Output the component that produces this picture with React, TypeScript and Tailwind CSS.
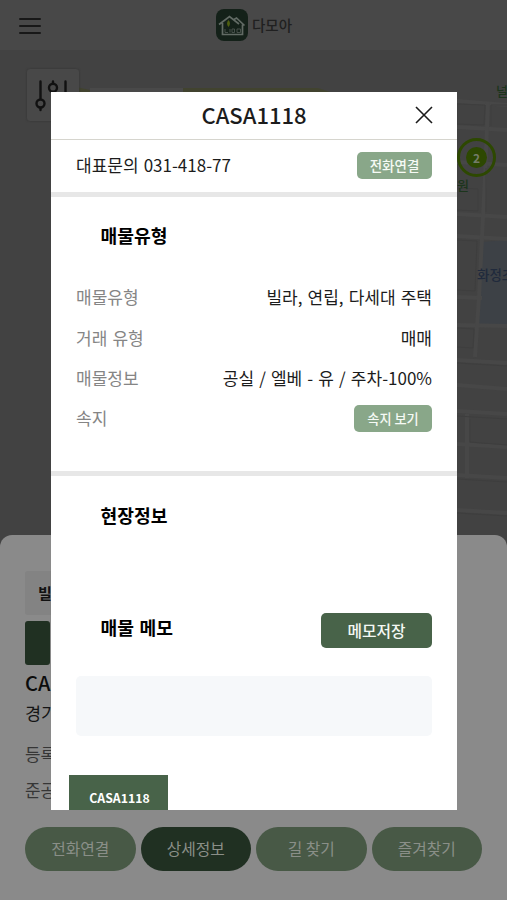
import React from "react";

function Logo() {
  return (
    <svg width="32" height="32" viewBox="0 0 32 32" fill="none">
      <rect width="32" height="32" rx="8" fill="#142119" />
      <path d="M3 15.5 13.5 7.500l9.500 7.500M18 10.500l2.500-1.500 8 7.500M6.500 14v11.500h20V15.500" stroke="#626b65" strokeWidth="1.7" />
      <path d="M12.500 11c2 2.500 2 4.500 0 7-2-2.500-2-4.500 0-7" fill="#4f5f10" />
      <path d="M9 20v3.500h3M14 20v3.500M16 20h2.500v3.500H16zM21 20h3.500v3.500H21z" stroke="#4c5650" strokeWidth=".9" />
    </svg>
  );
}

function TopBar() {
  return (
    <header className="flex h-[50px] shrink-0 items-center bg-[#484848] px-[19px]">
      <div className="flex flex-1 flex-col gap-[5px] pt-0.5">
        <span className="h-0.5 w-[22px] rounded bg-[#181818]" />
        <span className="h-0.5 w-[22px] rounded bg-[#181818]" />
        <span className="h-0.5 w-[22px] rounded bg-[#181818]" />
      </div>
      <div className="flex items-center gap-1 pl-px">
        <Logo />
        <span className="text-[14.500px] leading-5 font-medium text-[#202020]">다모아</span>
      </div>
      <div className="flex-1" />
    </header>
  );
}

function MapArea() {
  return (
    <section className="relative h-[485px] shrink-0 overflow-hidden bg-[#424242]">
      <svg className="absolute inset-0" width="507" height="500" fill="none">
        <path d="M76 42V37l14 3h93V38h135l15 5" fill="#41432f" />
        <path d="M90 40h93" stroke="#494949" strokeWidth="4" />
        <path d="M482 192l25-2v84h-28z" fill="#3d4146" />
        <g stroke="#474747" strokeWidth="4">
          <path d="M457 51l50 4M457 77l50 3M457 112l50 3M457 164l50 3M457 186l50 3M457 247l25 1M457 275l50 1M457 310l50 3M457 335l50 4M457 361l50 3M457 394l50 3M457 425l50 3M457 460l50 3" />
          <path d="M488 52l-3 75-6 120-4 60M467 364v64" />
        </g>
        <g stroke="#3e3e3e">
          <path d="M457 54l28 1-1 20-27-1zM491 55h16M491 55v21M457 138l21 1v22l-21-1M486 118v44M457 190l20 1-2 50-18-1M457 278l17 1-1 19-16-1M457 313l50 3M457 366l50 3M470 369v23l37 3M457 429l50 3M457 463l50 3" />
        </g>
      </svg>
      <span className="absolute top-[31px] left-[496px] text-[13px] leading-5 font-medium whitespace-nowrap text-[#1c351c]">널</span>
      <span className="absolute top-[125px] left-[457px] text-[13px] leading-5 font-medium whitespace-nowrap text-[#1c351c]">원</span>
      <span className="absolute top-[214px] left-[477px] text-[13.500px] leading-5 font-medium whitespace-nowrap text-[#202a3c]">화정초</span>
      <div className="absolute top-[88px] left-[457px] flex size-[39px] items-center justify-center rounded-full border-[3px] border-[#2d4801]">
        <span className="flex size-[21px] items-center justify-center rounded-full bg-[#2d4801] text-[12px] leading-4 font-bold text-[#747c68]">2</span>
      </div>
      <div className="absolute top-[19px] left-[27px] size-[52px] rounded-[3px] bg-[#484848] shadow-[0_0_2px_#303030]">
        <svg width="52" height="52" fill="none" stroke="#111" strokeWidth="2.4" strokeLinecap="round">
          <path d="M13.500 12.500v17M13.500 39v2M26 12.500v2M26 23v17M38.500 12.500v17" />
          <circle cx="13.500" cy="34.500" r="4" />
          <circle cx="26" cy="18.800" r="4" />
          <circle cx="38.500" cy="34.500" r="4" />
        </svg>
      </div>
    </section>
  );
}

const actions = [
  { label: "전화연결", style: "bg-[#485946]" },
  { label: "상세정보", style: "bg-[#203022]" },
  { label: "길 찾기", style: "bg-[#485946]" },
  { label: "즐겨찾기", style: "bg-[#485946]" },
];

function BottomSheet() {
  return (
    <section className="flex flex-1 flex-col bg-[#424242]">
      <div className="flex flex-1 flex-col rounded-t-[12px] bg-[#8a8a8a] px-[25px] pt-9">
        <div className="h-11 w-[60px] rounded-[3px] bg-[#838383] pl-[13px] text-[15px] leading-[43px] font-bold text-[#111]">빌라</div>
        <div className="mt-1.5 h-11 w-[25px] rounded-[3px] bg-[#203022]" />
        <div className="mt-[3px] text-[20px] leading-[29px] font-medium text-[#0c0c0c]">CASA1118</div>
        <div className="mt-px text-[17.500px] leading-[30px] text-[#151515]">경기도</div>
        <div className="mt-2 text-[16.900px] leading-9 text-[#363636]">등록일</div>
        <div className="text-[16.900px] leading-9 text-[#363636]">준공일</div>
        <div className="mt-[19px] grid grid-cols-4 gap-[5px]">
          {actions.map((a) => (
            <button key={a.label} className={`h-11 rounded-full text-[15.800px] text-[#8a8f88] ${a.style}`}>
              {a.label}
            </button>
          ))}
        </div>
      </div>
    </section>
  );
}

function Row({ label, children }: { label: string; children: React.ReactNode }) {
  return (
    <div className="flex h-[40.300px] items-center justify-between text-[17px]">
      <span className="text-[#858585]">{label}</span>
      {children}
    </div>
  );
}

function Dialog() {
  return (
    <div className="mt-[92px] flex h-[718px] w-[406px] flex-col overflow-hidden bg-white text-[#1c1c1c] [word-spacing:1.3px]">
      <div className="flex h-12 shrink-0 items-center border-b border-[#d6d5ce] pr-6 pl-[42px]">
        <h1 className="-mt-1 flex-1 text-center text-[22px] leading-8 font-medium">CASA1118</h1>
        <svg className="-mt-0.5" width="18" height="18" fill="none" stroke="#1a1a1a" strokeWidth="1.600">
          <path d="M1 1l16 16M17 1L1 17" />
        </svg>
      </div>
      <div className="flex h-[52px] shrink-0 items-center justify-between px-[25px] pb-0.5">
        <span className="text-[17px]">대표문의 031-418-77</span>
        <button className="h-[27px] w-[75px] rounded-[5px] bg-[#89a789] text-[13.500px] font-medium text-[#f6faf5]">전화연결</button>
      </div>
      <div className="h-[5px] shrink-0 bg-[#e7e7e7]" />
      <h2 className="mt-[23px] ml-[49.500px] text-[18.200px] leading-[30px] font-bold text-black">매물유형</h2>
      <div className="mt-[27px] px-[25px]">
        <Row label="매물유형">
          <span>빌라, 연립, 다세대 주택</span>
        </Row>
        <Row label="거래 유형">
          <span>매매</span>
        </Row>
        <Row label="매물정보">
          <span>공실 / 엘베 - 유 / 주차-100%</span>
        </Row>
        <Row label="속지">
          <button className="h-[27px] w-[78px] rounded-[5px] bg-[#89a789] pt-px text-[13.200px] font-medium text-[#f6faf5]">속지 보기</button>
        </Row>
      </div>
      <div className="mt-[33px] h-[5px] shrink-0 bg-[#e7e7e7]" />
      <h2 className="mt-6 ml-[49.500px] text-[18.200px] leading-[30px] font-bold text-black">현장정보</h2>
      <div className="mt-[83px] flex h-[35px] shrink-0 items-center justify-between pr-[25px] pl-[49.500px]">
        <h2 className="-mt-2 text-[18.200px] leading-[30px] font-bold text-black">매물 메모</h2>
        <button className="h-[35px] w-[111px] rounded-[5px] bg-[#486349] pt-px text-[15.800px] font-medium text-[#f4f8f3]">메모저장</button>
      </div>
      <div className="mx-[25px] mt-7 h-[60px] shrink-0 rounded-[5px] bg-[#f6f8fa]" />
      <div className="mt-[39px] ml-[18px] h-[60px] w-[99px] shrink-0 bg-[#486349] pt-[14px] pl-0.5 text-center text-[12.300px] leading-[19px] font-bold text-white">
        CASA1118
      </div>
    </div>
  );
}

export default function App() {
  return (
    <main className="relative flex h-[900px] w-[507px] flex-col overflow-hidden font-['Noto_Sans_CJK_KR',sans-serif]">
      <TopBar />
      <MapArea />
      <BottomSheet />
      <div className="absolute inset-0 flex items-start pl-[51px]">
        <Dialog />
      </div>
    </main>
  );
}
